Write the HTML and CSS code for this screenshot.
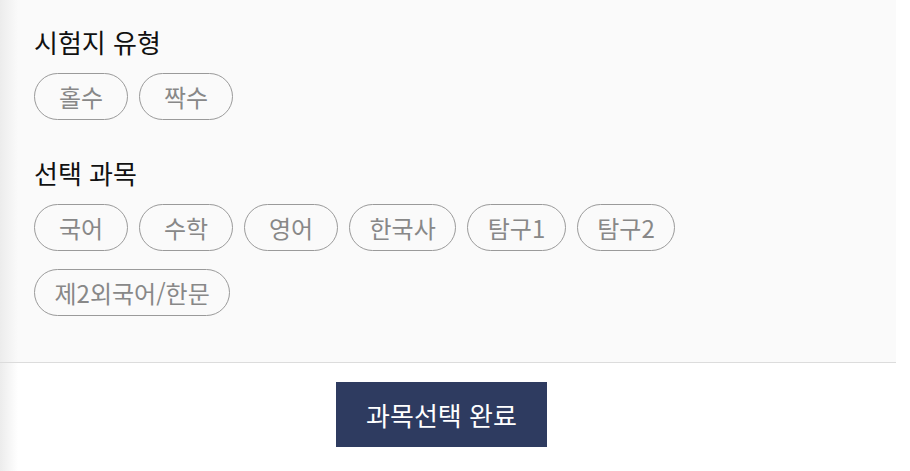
FILE: index.html
```html
<!DOCTYPE html>
<html lang="ko">
<head>
<meta charset="utf-8">
<link rel="stylesheet" href="styles.css">
</head>
<body>
<div class="page">
  <div class="panel">
    <section class="group">
      <h2 class="title">시험지 유형</h2>
      <div class="chips">
        <span class="chip">홀수</span>
        <span class="chip">짝수</span>
      </div>
    </section>
    <section class="group">
      <h2 class="title">선택 과목</h2>
      <div class="chips">
        <span class="chip">국어</span>
        <span class="chip">수학</span>
        <span class="chip">영어</span>
        <span class="chip">한국사</span>
        <span class="chip">탐구1</span>
        <span class="chip">탐구2</span>
        <span class="chip">제2외국어/한문</span>
      </div>
    </section>
  </div>
  <div class="footer">
    <button class="submit">과목선택 완료</button>
  </div>
</div>
</body>
</html>
```
FILE: styles.css
```css
html, body {
  margin: 0;
  padding: 0;
  background: #ffffff;
}
body {
  font-family: "Noto Sans CJK KR", "Noto Sans", sans-serif;
  width: 910px;
  height: 471px;
  overflow: hidden;
}
.page {
  width: 896px;
  height: 471px;
  background: linear-gradient(to right, #ececec 0px, rgba(255,255,255,0) 18px), #ffffff;
}
.panel {
  height: 363px;
  box-sizing: border-box;
  background: linear-gradient(to right, #ececec 0px, rgba(250,250,250,0) 18px), #fafafa;
  border-bottom: 1px solid #dcdcdc;
  padding: 24px 0 0 34px;
  display: flex;
  flex-direction: column;
  gap: 35px;
}
.title {
  margin: 0;
  font-size: 26px;
  font-weight: 400;
  line-height: 35px;
  color: #111;
}
.chips {
  margin-top: 14px;
  display: flex;
  flex-wrap: wrap;
  column-gap: 11px;
  row-gap: 18px;
  width: 700px;
}
.chip {
  box-sizing: border-box;
  height: 47px;
  min-width: 94px;
  padding: 0 19.5px;
  border: 1px solid #9a9a9a;
  border-radius: 24px;
  display: flex;
  align-items: center;
  justify-content: center;
  font-size: 24px;
  color: #888;
}
.footer {
  padding: 19px 0 0 336px;
}
.submit {
  width: 211px;
  height: 65px;
  border: 0;
  background: #2e3b60;
  color: #fff;
  font-family: "Noto Sans CJK KR", "Noto Sans", sans-serif;
  font-size: 26px;
  padding: 0;
}
```
